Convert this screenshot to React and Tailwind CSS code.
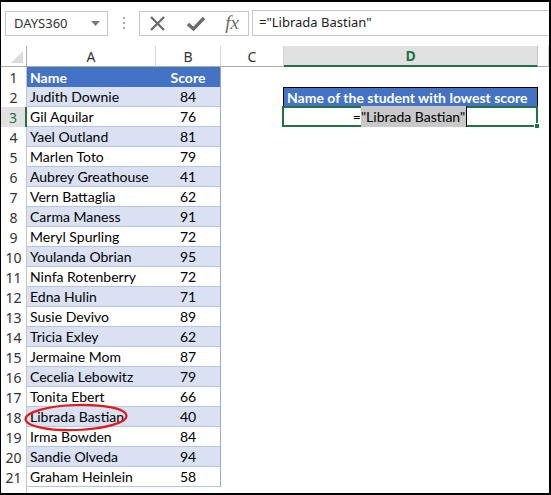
import React from "react";

const rows = [
  ["Judith Downie", 84],
  ["Gil Aquilar", 76],
  ["Yael Outland", 81],
  ["Marlen Toto", 79],
  ["Aubrey Greathouse", 41],
  ["Vern Battaglia", 62],
  ["Carma Maness", 91],
  ["Meryl Spurling", 72],
  ["Youlanda Obrian", 95],
  ["Ninfa Rotenberry", 72],
  ["Edna Hulin", 71],
  ["Susie Devivo", 89],
  ["Tricia Exley", 62],
  ["Jermaine Mom", 87],
  ["Cecelia Lebowitz", 79],
  ["Tonita Ebert", 66],
  ["Librada Bastian", 40],
  ["Irma Bowden", 84],
  ["Sandie Olveda", 94],
  ["Graham Heinlein", 58],
];

const cellFont = { fontFamily: "Lato, 'Noto Sans', sans-serif" };
const uiFont = { fontFamily: "'Noto Sans', 'Open Sans', sans-serif" };

const RowHeader = ({ n, active }) => (
  <div
    className={
      "h-[20px] flex items-center justify-center text-[14px] " +
      (active
        ? "bg-[#e1e1e1] text-[#217346] border-r-2 border-[#217346]"
        : "bg-white text-[#333] border-r border-[#c6c6c6]")
    }
    style={uiFont}
  >
    {n}
  </div>
);

const FormulaBar = () => (
  <div className="flex items-stretch h-[26px] mt-[8px]">
    <div className="ml-[4px] w-[103px] border border-[#c6c6c6] flex items-center justify-between pl-[8px] pr-[7px] mt-px">
      <span className="text-[13px] text-[#333]" style={uiFont}>
        DAYS360
      </span>
      <svg width="9" height="6" viewBox="0 0 9 6">
        <path d="M0 0 L9 0 L4.5 5 Z" fill="#7a7a7a" />
      </svg>
    </div>
    <div className="w-[31px] flex flex-col items-center justify-center gap-[3px]">
      <span className="w-[2px] h-[2px] bg-[#aaa]" />
      <span className="w-[2px] h-[2px] bg-[#aaa]" />
      <span className="w-[2px] h-[2px] bg-[#aaa]" />
    </div>
    <div className="w-[110px] border border-[#c6c6c6] flex items-center justify-between pl-[9px] pr-[9px] mt-px">
      <svg width="17" height="17" viewBox="0 0 17 17">
        <path d="M2 2 L15 15 M15 2 L2 15" stroke="#6b6b6b" strokeWidth="2.3" />
      </svg>
      <svg width="20" height="17" viewBox="0 0 20 17">
        <path d="M2 9 L7.5 14 L18 3" stroke="#6b6b6b" strokeWidth="3.4" fill="none" />
      </svg>
      <span
        className="text-[19px] italic text-[#6b6b6b] leading-none -mt-[2px]"
        style={{ fontFamily: "'Liberation Serif', 'DejaVu Serif', serif" }}
      >
        fx
      </span>
    </div>
    <div className="ml-[3px] flex-1 border-t border-b border-l border-[#c6c6c6] flex items-center pl-[6px]">
      <span className="text-[13px] text-[#222]" style={uiFont}>
        ="Librada Bastian"
      </span>
    </div>
  </div>
);

const ColHeader = ({ label, active }) => (
  <div
    className={
      "h-[21px] flex items-center justify-center text-[14px] " +
      (active
        ? "bg-[#e1e1e1] text-[#217346] font-bold border-b-2 border-[#217346] border-r border-r-[#c6c6c6]"
        : "bg-white text-[#333] border-b border-[#ababab] border-r border-r-[#d4d4d4]")
    }
    style={uiFont}
  >
    {label}
  </div>
);

export default function App() {
  return (
    <div className="w-[551px] h-[495px] bg-white border-t-2 border-l border-r-2 border-b-2 border-black overflow-hidden relative">
      <FormulaBar />
      <div className="mt-[10px] grid grid-cols-[26px_129px_65px_63px_254px_1fr]">
        {/* column headers */}
        <div className="h-[21px] bg-white border-r border-b border-[#ababab] flex items-end justify-end p-[3px]">
          <svg width="12" height="12" viewBox="0 0 12 12">
            <path d="M12 0 L12 12 L0 12 Z" fill="#dcdcdc" />
          </svg>
        </div>
        <ColHeader label="A" />
        <ColHeader label="B" />
        <ColHeader label="C" />
        <ColHeader label="D" active />
        <ColHeader label="" />

        {/* row 1 */}
        <RowHeader n={1} />
        <div className="h-[20px] bg-[#4472c4] text-white font-bold text-[14px] flex items-center pl-[3px]" style={cellFont}>
          Name
        </div>
        <div className="h-[20px] bg-[#4472c4] text-white font-bold text-[14px] flex items-center justify-center border-r border-[#8ea9db]" style={cellFont}>
          Score
        </div>
        <div />
        <div />
        <div />

        {rows.map(([name, score], i) => {
          const n = i + 2;
          const shaded = n % 2 === 0;
          const bg = shaded ? "bg-[#d9e1f2]" : "bg-white";
          return (
            <React.Fragment key={n}>
              <RowHeader n={n} active={n === 3} />
              <div
                className={"h-[20px] border-b border-[#b4c6e7] text-[14px] text-black flex items-center pl-[3px] " + bg}
                style={cellFont}
              >
                {name}
              </div>
              <div
                className={"h-[20px] border-b border-r border-[#b4c6e7] border-r-[#8ea9db] text-[14px] text-black flex items-center justify-center " + bg}
                style={cellFont}
              >
                {score}
              </div>
              <div />
              {n === 2 ? (
                <div
                  className="h-[20px] -ml-px bg-[#4472c4] border border-black text-white font-bold text-[14px] flex items-center pl-[3px] whitespace-nowrap"
                  style={cellFont}
                >
                  Name of the student with lowest score
                </div>
              ) : n === 3 ? (
                <div
                  className="h-[21px] -mt-px -ml-[2px] border-2 border-[#217346] flex items-center justify-center text-[14px] text-black relative"
                  style={cellFont}
                >
                  <span>=</span>
                  <span className="bg-[#c8c8c8] border-r border-black pr-px">"Librada Bastian"</span>
                  <span className="absolute -right-[4px] -bottom-[4px] w-[6px] h-[6px] bg-[#217346] border border-white" />
                </div>
              ) : (
                <div />
              )}
              <div />
            </React.Fragment>
          );
        })}

        <RowHeader n={22} />
        <div />
        <div />
        <div />
        <div />
        <div />
      </div>

      <svg className="absolute left-[22px] top-[401px]" width="110" height="32" viewBox="0 0 110 32">
        <ellipse cx="53" cy="14.5" rx="50.5" ry="12.5" transform="rotate(-2 53 14.5)" fill="none" stroke="#e21b1b" strokeWidth="2.2" />
      </svg>
    </div>
  );
}
